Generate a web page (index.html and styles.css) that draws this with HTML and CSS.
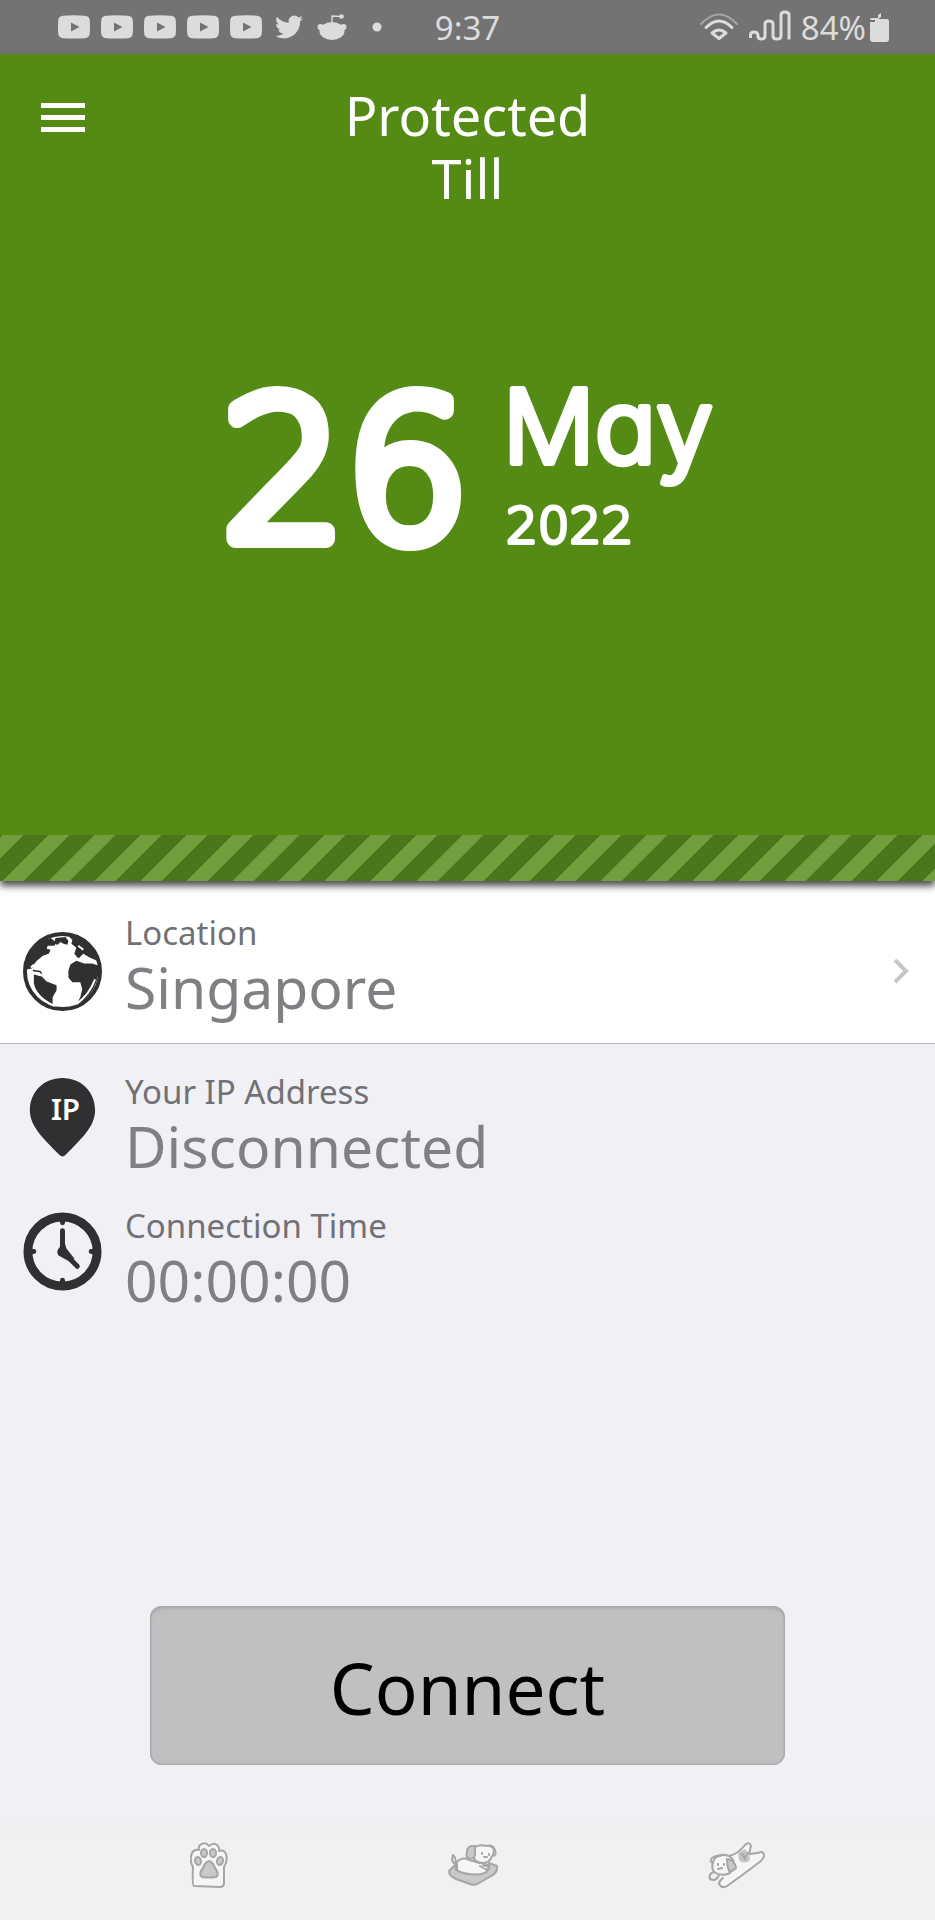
FILE: index.html
```html
<!DOCTYPE html>
<html lang="en">
<head>
    <meta charset="UTF-8">
    <meta name="viewport" content="width=device-width, initial-scale=1.0">
    <title>VPN</title>
    <link rel="stylesheet" href="styles.css">
</head>
<body>
    <!-- shared shapes -->
    <svg class="defs" aria-hidden="true">
        <symbol id="youtube" viewBox="0 0 32 24">
            <path fill-rule="evenodd" d="M5 .7Q16-.2 27 .7Q31.400 1 31.700 5Q32.300 12 31.700 19Q31.400 22.600 27 23.200Q16 24 5 23.200Q.6 22.600.3 19Q-.3 12 .3 5Q.6 1 5 .7ZM13 7.500V16.500L21.500 12Z"/>
        </symbol>
    </svg>

    <div class="status-bar">
        <div class="status-left">
            <svg class="notif"><use href="#youtube"/></svg>
            <svg class="notif"><use href="#youtube"/></svg>
            <svg class="notif"><use href="#youtube"/></svg>
            <svg class="notif"><use href="#youtube"/></svg>
            <svg class="notif"><use href="#youtube"/></svg>
            <svg class="notif tall" viewBox="0 0 24 24"><path d="M23.950 4.570a10 10 0 0 1-2.820.780 4.960 4.960 0 0 0 2.160-2.720c-.950.550-2 .950-3.130 1.180a4.920 4.920 0 0 0-8.380 4.480A13.900 13.900 0 0 1 1.640 3.160a4.920 4.920 0 0 0 1.520 6.570 4.900 4.900 0 0 1-2.230-.610v.060a4.920 4.920 0 0 0 3.950 4.830 5 5 0 0 1-2.210.080 4.940 4.940 0 0 0 4.600 3.420A9.870 9.870 0 0 1 0 19.540a13.990 13.990 0 0 0 7.550 2.210c9.050 0 14-7.500 14-13.980 0-.210 0-.420-.020-.630a9.940 9.940 0 0 0 2.420-2.570z"/></svg>
            <svg class="notif tall" viewBox="0 0 32 28">
                <ellipse cx="16" cy="18" rx="12.500" ry="9"/>
                <circle cx="4.500" cy="14" r="3"/><circle cx="27.500" cy="14" r="3"/>
                <circle cx="25.500" cy="3.500" r="2.300"/>
                <path d="M16 10V3L25 3.500" fill="none" stroke="#dcdcdc" stroke-width="1.400"/>
            </svg>
            <svg class="notif" viewBox="0 0 32 24"><circle cx="18" cy="12" r="4.500"/></svg>
        </div>
        <span class="clock">9:37</span>
        <div class="status-right">
            <svg width="40" height="28" viewBox="0 0 40 28" fill="none" stroke="#dcdcdc" stroke-width="3" stroke-linecap="round">
                <path d="M2 11Q20-8 38 11" stroke="#a5a5a5" stroke-width="2"/>
                <path d="M7 14.500Q20 1.500 33 14.500"/>
                <path d="M13 20Q20 14 27 20L20 25.500Z" stroke-linejoin="round"/>
            </svg>
            <svg class="signal" width="42" height="31" viewBox="0 0 42 31" fill="none" stroke="#dcdcdc" stroke-width="3">
                <path d="M1.500 28V25Q1.500 22 5 22T9 25V26Q9 29 12.500 29T16 26V14Q16 11 20 11T24 14V26Q24 29 28 29T32 26V5Q32 2 36 2T40 5V29.500"/>
            </svg>
            <span>84%</span>
            <svg class="battery" width="19" height="29" viewBox="0 0 19 29">
                <path d="M2 5H8V2L11 0V4L8 6H17Q19 6 19 8V26Q19 29 16 29H3Q0 29 0 26V9H5V7H0Q0 5 2 5Z"/>
            </svg>
        </div>
    </div>

    <header class="hero">
        <div class="title-bar">
            <button class="menu" type="button" aria-label="Menu"><span></span><span></span><span></span></button>
            <h1>Protected<br>Till</h1>
        </div>
        <!-- svg text, so the stroke gets round corners -->
        <svg class="date" viewBox="0 0 500 190">
            <text class="day" x="4" y="163">26</text>
            <text class="month" x="285" y="87">May</text>
            <text class="year" x="288" y="167">2022</text>
        </svg>
        <div class="stripes"></div>
    </header>

    <main>
        <a class="row location" href="#">
            <svg class="icon" viewBox="0 0 80 80">
                <circle cx="40" cy="40" r="38" fill="#fff" stroke="#303032" stroke-width="4"/>
                <g fill="#303032">
                    <path d="M3 38Q4 16 21 8L28 6L33 10L32 14L25 14L24 17L28 18L26 22L20 24L14 29L11 33L9 37Z"/>
                    <path d="M33 6L43 5L46 9L45 13L41 12L38 10L35 13L31 12ZM46 4L59 7Q70 14 75 29L68 26L61 22L56 27L52 22L54 16L49 12L50 8Z"/>
                    <path d="M46 39L48 33L54 29L62 32L70 32L76 34V44Q73 60 61 70L55 72L58 66L60 58L58 51L50 51L46 46Z"/>
                    <path d="M11 43L19 45L24 50L34 54L34 59L30 66V74Q14 66 11 52Z"/>
                </g>
                <path d="M6 42Q9 65 32 75M73 48Q67 64 54 73" fill="none" stroke="#fff" stroke-width="2"/>
                <path d="M8 36L11 33M10 40L16 43L21 43L20 39L15 38M52 25L58 29M62 27L70 31M56 14L61 18" fill="none" stroke="#fff" stroke-width="2"/>
                <path d="M10 39L17 40L19 42" fill="none" stroke="#303032" stroke-width="1.500"/>
            </svg>
            <span class="text">
                <span class="label">Location</span>
                <span class="value">Singapore</span>
            </span>
            <svg class="chevron" viewBox="0 0 18 28"><path d="M3 3L14 14L3 25" fill="none" stroke="#c7c7c7" stroke-width="4"/></svg>
        </a>
        <div class="row">
            <svg class="icon" viewBox="0 0 80 80">
                <path fill="#303032" d="M40 0C59 0 73 14 73 33C73 49 59 62 43 78Q40 81 37 78C21 62 7 49 7 33C7 14 21 0 40 0Z"/>
                <text class="pin-text" x="43" y="43" text-anchor="middle">IP</text>
            </svg>
            <div class="text">
                <span class="label">Your IP Address</span>
                <span class="value">Disconnected</span>
            </div>
        </div>
        <div class="row">
            <svg class="icon" viewBox="0 0 80 80" fill="none" stroke="#303032">
                <circle cx="40" cy="40" r="35" stroke-width="9"/>
                <path d="M40 5V11M40 69V75M5 40H11M69 40H75" stroke-width="5" stroke-linecap="round"/>
                <path d="M40 19V40L55 55" stroke-width="5" stroke-linecap="round"/>
                <path d="M39 30H42L44 37L52 47L47 50L36 44Q33 40 37 36Z" fill="#303032" stroke="none"/>
            </svg>
            <div class="text">
                <span class="label">Connection Time</span>
                <span class="value">00:00:00</span>
            </div>
        </div>
        <button class="connect" type="button">Connect</button>
    </main>

    <nav>
        <a href="#" aria-label="Recents">
            <svg width="38" height="46" viewBox="0 0 38 46">
                <path d="M4 44Q2 43 3 25Q-1 18 2 11Q4 7 9 8Q8 3 12 2Q16 0 19 4Q24 0 27 3Q30 5 29 9Q34 7 36 12Q38 19 34 25L34 41Q34 45 30 45Z"/>
                <g class="shade">
                    <ellipse cx="14" cy="11" rx="3" ry="4"/><ellipse cx="23" cy="11" rx="3" ry="4"/>
                    <ellipse cx="8" cy="19" rx="3" ry="4" transform="rotate(-15 8 19)"/><ellipse cx="30" cy="19" rx="3" ry="4" transform="rotate(15 30 19)"/>
                    <path d="M19 19Q23 20 25 26Q30 32 26 35Q19 36 12 35Q8 32 13 26Q15 20 19 19Z"/>
                </g>
            </svg>
        </a>
        <a href="#" aria-label="Home">
            <svg width="52" height="44" viewBox="0 0 52 44">
                <path d="M10 21Q3 20 6 12Q9 15 9 20Q15 13 22 17L33 20Q41 20 43 25L41 32H10Z"/>
                <path class="shade" d="M8 22L2 28Q2 33 9 36L23 41Q28 43 32 40L46 32Q51 28 50 23L42 20Q44 29 34 31Q20 33 9 27Z"/>
                <path d="M27 5Q32 1 39 3Q46 1 48 7Q50 13 45 13Q43 20 35 20Q27 19 26 13Z"/>
                <path class="shade" d="M28 3Q20 2 20 9Q18 15 23 16Q29 16 28 8Z"/>
                <path d="M42 3Q49 4 46 11M33 23L40 27L42 24L36 22M35 10V11M42 11V12M37 14H40" fill="none"/>
            </svg>
        </a>
        <a href="#" aria-label="Back">
            <svg width="58" height="48" viewBox="0 0 58 48">
                <path d="M22 15Q31 13 38 4Q42 0 44 5L42 13L51 12Q57 9 57 15Q56 19 50 23L34 35L20 45Q15 48 12 43Q12 40 16 37"/>
                <path class="spot" d="M31 12L38 8L42 13L43 19Q37 24 32 19Z"/>
                <path d="M8 17Q14 12 22 15Q31 20 23 32Q15 36 7 31Q3 25 8 17Z"/>
                <path class="shade" d="M20 18Q27 18 29 27Q25 31 22 30Q20 25 20 18Z"/>
                <path d="M6 22Q2 21 5 17Q9 14 13 15M7 31Q1 33 3 38Q9 41 12 34M11 23V24M17 23V24M11 28L15 27M35 13L38 18M41 12L38 16" fill="none"/>
            </svg>
        </a>
    </nav>
</body>
</html>
```
FILE: styles.css
```css
* {
    box-sizing: border-box;
}
body {
    margin: 0;
    min-height: 100vh;
    display: flex;
    flex-direction: column;
    font-family: "Noto Sans", sans-serif;
    background-color: #f0f0f5;
}
button {
    font-family: inherit;
    border: none;
    cursor: pointer;
}
.defs {
    display: none;
}

/* status bar */
.status-bar {
    display: flex;
    align-items: center;
    height: 54px;
    padding: 0 46px;
    background-color: #737373;
    color: #dcdcdc;
    fill: #dcdcdc;
    font-size: 33px;
}
.status-left, .status-right {
    flex: 1;
    display: flex;
    align-items: center;
}
.status-left {
    gap: 11px;
}
.status-right {
    justify-content: flex-end;
    gap: 10px;
}
.notif {
    width: 32px;
    height: 24px;
}
.notif:first-child {
    margin-left: 12px;
}
.notif.tall {
    height: 28px;
}
.signal {
    margin-bottom: 3px;
}
.battery {
    margin-left: -6px;
}

/* green header */
.hero {
    background-color: #548b15;
    color: #fff;
    box-shadow: 0 5px 7px rgba(0, 0, 0, 0.7);
    position: relative;
}
.title-bar {
    display: grid;
    grid-template-columns: 1fr auto 1fr;
    align-items: start;
    padding: 30px 41px 0;
}
.menu {
    display: flex;
    flex-direction: column;
    gap: 7px;
    width: 44px;
    margin-top: 19px;
    padding: 0;
    background: none;
}
.menu span {
    height: 5px;
    background-color: #fff;
}
h1 {
    margin: 0;
    font-size: 54px;
    font-weight: normal;
    line-height: 63px;
    text-align: center;
}
.date {
    display: block;
    width: 500px;
    max-width: 100%;
    margin: 166px auto 269px;
    overflow: visible;
    fill: #fff;
    stroke: #fff;
    stroke-linejoin: round;
}
.day, .year {
    font-family: "DejaVu Sans", sans-serif;
    font-weight: 200;
}
.day {
    font-size: 194px;
    stroke-width: 18px;
}
.month {
    font-family: Inter, sans-serif;
    font-feature-settings: "cv11";
    font-size: 102px;
    font-weight: 300;
    stroke-width: 6px;
}
.year {
    font-size: 50px;
    stroke-width: 4px;
}
.stripes {
    height: 46px;
    background-image: linear-gradient(135deg, #4b761c 3%, #729e3e 3%, #729e3e 25%, #4b761c 25%, #4b761c 53%, #729e3e 53%, #729e3e 75%, #4b761c 75%);
    background-size: 46px 46px;
}

/* info rows */
main {
    flex: 1;
    display: flex;
    flex-direction: column;
}
.row {
    display: flex;
    align-items: center;
    padding: 26px 25px 0 23px;
    color: #7f7f84;
    text-decoration: none;
}
.row .icon {
    width: 79px;
    height: 79px;
    margin: 0 23px 14px 0;
}
.text {
    flex: 1;
}
.label, .value {
    display: block;
}
.label {
    font-size: 33px;
    line-height: 44px;
    color: #717175;
}
.value {
    font-size: 57px;
    line-height: 64px;
}
.location {
    padding: 30px 25px 24px 23px;
    background-color: #fff;
    border-bottom: 1px solid #b5b5b8;
}
.location .icon {
    margin: 12px 23px 0 0;
}
.chevron {
    width: 18px;
    height: 28px;
    margin-top: 12px;
}
.pin-text {
    font-size: 30px;
    font-weight: 600;
    fill: #fff;
}
.connect {
    width: 68%;
    margin: auto auto 52px;
    padding: 34px 0 30px;
    font-size: 71px;
    line-height: 95px;
    color: #000;
    background-color: #c0c0c0;
    border-radius: 12px;
    box-shadow: inset 0 0 2px 1px #a3a3a8, inset 0 3px 3px #aeaeb4;
}

/* bottom navigation */
nav {
    display: flex;
    height: 103px;
    padding: 0 67px 8px 77px;
    background: linear-gradient(#f0f0f5, #f1f1f1 20px);
}
nav a {
    flex: 1;
    display: flex;
    align-items: center;
    justify-content: center;
}
nav svg {
    fill: #f6f6f6;
    stroke: #a6a6a6;
    stroke-width: 2;
    stroke-linecap: round;
    stroke-linejoin: round;
}
nav .shade {
    fill: #c9c9c9;
}
nav .spot {
    fill: #c4c4c4;
    stroke: none;
}
```
